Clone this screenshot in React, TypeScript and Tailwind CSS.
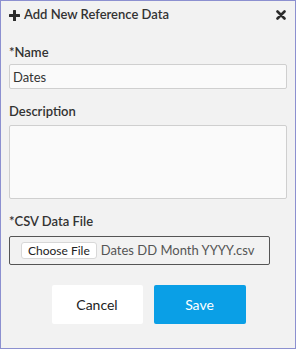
const PlusIcon = () => (
  <svg width="11" height="11" viewBox="0 0 11 11" className="text-[#2b2b2b]">
    <rect x="4" y="0" width="3" height="11" rx="0.5" fill="currentColor" />
    <rect x="0" y="4" width="11" height="3" rx="0.5" fill="currentColor" />
  </svg>
);

const CloseIcon = () => (
  <svg width="10" height="10" viewBox="0 0 10 10" className="text-[#2b2b2b]">
    <path d="M1.5 1.5 L8.5 8.5 M8.5 1.5 L1.5 8.5" stroke="currentColor" strokeWidth="2.6" strokeLinecap="round" />
  </svg>
);

const App = () => {
  return (
    <div className="w-[296px] h-[349px] bg-[#f2f2f2] border border-[#8c90d0] text-[#333] font-['Lato',sans-serif] flex flex-col px-2">
      {/* header */}
      <div className="flex items-center justify-between h-[28px]">
        <div className="flex items-center gap-[4px] text-[13px] font-semibold">
          <PlusIcon />
          <span>Add New Reference Data</span>
        </div>
        <div className="mr-[1px]">
          <CloseIcon />
        </div>
      </div>

      {/* name */}
      <label className="mt-[15px] text-[13px] font-semibold leading-[16px]">*Name</label>
      <input
        type="text"
        defaultValue="Dates"
        className="mt-[4px] h-[25px] w-full bg-[#fafafa] border border-[#cfcfcf] rounded-[2px] px-[3px] text-[13px] outline-none"
      />

      {/* description */}
      <label className="mt-[14px] text-[13px] font-semibold leading-[16px]">Description</label>
      <textarea className="mt-[6px] h-[74px] w-full bg-[#fafafa] border border-[#cfcfcf] rounded-[2px] resize-none outline-none" />

      {/* file */}
      <label className="mt-[14px] text-[13px] font-semibold leading-[16px]">*CSV Data File</label>
      <div className="mt-[7px] w-[261px] h-[29px] border border-[#555] rounded-[2px] flex items-center px-[11px] gap-[4px]">
        <button
          type="button"
          className="h-[17px] px-[6px] bg-white border border-[#d8d8d8] rounded-[3px] text-[12px] text-[#222] leading-none"
        >
          Choose File
        </button>
        <span className="text-[13px] text-[#555]">Dates DD Month YYYY.csv</span>
      </div>

      {/* actions */}
      <div className="mt-[20px] flex justify-center gap-[11px] pl-[1px]">
        <button type="button" className="w-[91px] h-[39px] bg-white rounded-[2px] text-[14px] text-[#222]">
          Cancel
        </button>
        <button type="button" className="w-[92px] h-[39px] bg-[#0a9fe6] rounded-[2px] text-[14px] text-white">
          Save
        </button>
      </div>
    </div>
  );
};

export default App;
